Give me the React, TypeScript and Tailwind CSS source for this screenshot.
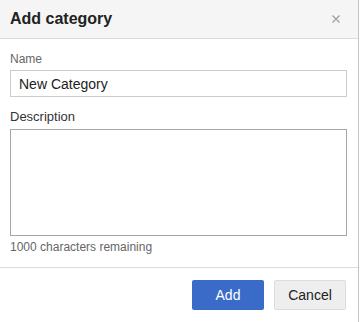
import { useState } from 'react';

const MAX_LENGTH = 1000;

export default function App() {
  const [name, setName] = useState('New Category');
  const [description, setDescription] = useState('');

  const remaining = MAX_LENGTH - description.length;

  return (
    <div className="h-[322px] w-[360px] overflow-hidden bg-white font-['Liberation_Sans',Arial,sans-serif] text-[#333]">
      <div className="flex h-full w-[359px] flex-col border-r border-[#c4c4c4] bg-white">
        <div className="flex h-[39px] items-center justify-between border-b border-[#dcdcdc] bg-[#f5f5f5] pl-[10px] pr-[14px]">
          <h1 className="text-[16px] font-bold leading-5 text-[#222]">Add category</h1>
          <button type="button" aria-label="Close" className="flex h-4 w-4 items-center justify-center">
            <svg width="8" height="8" viewBox="0 0 8 8" fill="none">
              <path d="M0.5 0.5L7.5 7.5M7.5 0.5L0.5 7.5" stroke="#a3a3a3" strokeWidth="1.4" />
            </svg>
          </button>
        </div>

        <div className="flex flex-col border-b border-[#dcdcdc] pl-[10px] pr-[11px] pt-[12px] pb-[12px]">
          <label className="text-[12px] leading-4 text-[#666]">Name</label>
          <input
            value={name}
            onChange={(e) => setName(e.target.value)}
            className="mt-[3px] h-[27px] w-[337px] border border-[#cccccc] px-[8px] text-[14px] text-[#222] outline-none"
          />

          <label className="mt-[12px] text-[13px] leading-4 text-[#333]">Description</label>
          <textarea
            value={description}
            maxLength={MAX_LENGTH}
            onChange={(e) => setDescription(e.target.value)}
            className="mt-[4px] h-[107px] w-[337px] resize-none border border-[#a6a6a6] px-[8px] py-[4px] text-[14px] outline-none"
          />
          <p className="mt-[3px] text-[12px] leading-4 text-[#666]">{remaining} characters remaining</p>
        </div>

        <div className="flex justify-end gap-[10px] pr-[12px] pt-[12px]">
          <button type="button" className="h-[30px] w-[72px] rounded-[2px] bg-[#3b6bc9] text-[14px] text-white">
            Add
          </button>
          <button
            type="button"
            className="h-[30px] w-[72px] rounded-[2px] border border-[#dcdcdc] bg-[#eeeeee] text-[14px] text-[#222]"
          >
            Cancel
          </button>
        </div>
      </div>
    </div>
  );
}
